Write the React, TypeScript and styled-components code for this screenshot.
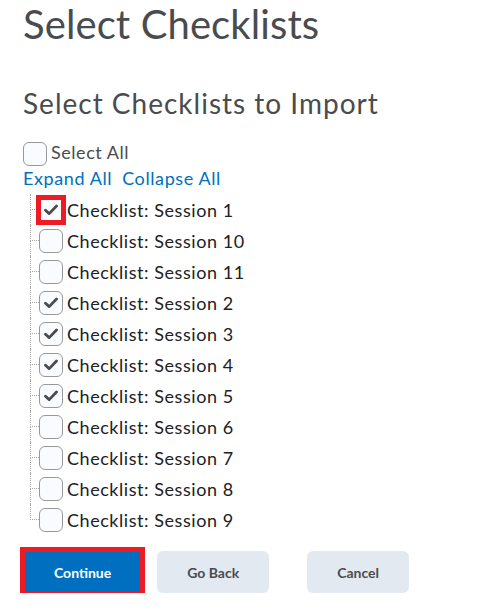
import styled, { createGlobalStyle } from 'styled-components';

const GlobalStyle = createGlobalStyle`
  body {
    margin: 0;
    background: #fff;
    font-family: Lato, 'Noto Sans', sans-serif;
    color: #202122;
  }
`;

const SESSIONS = [
  { name: 'Checklist: Session 1', checked: true, highlight: true },
  { name: 'Checklist: Session 10', checked: false },
  { name: 'Checklist: Session 11', checked: false },
  { name: 'Checklist: Session 2', checked: true },
  { name: 'Checklist: Session 3', checked: true },
  { name: 'Checklist: Session 4', checked: true },
  { name: 'Checklist: Session 5', checked: true },
  { name: 'Checklist: Session 6', checked: false },
  { name: 'Checklist: Session 7', checked: false },
  { name: 'Checklist: Session 8', checked: false },
  { name: 'Checklist: Session 9', checked: false },
];

const Page = styled.div`
  padding-left: 23px;
`;

const Title = styled.h1`
  margin: 0;
  font-size: 40px;
  line-height: 48px;
  font-weight: 400;
  letter-spacing: 0.1px;
  color: #494c4e;
`;

const SubTitle = styled.h2`
  margin: 38px 0 0;
  font-size: 28px;
  line-height: 34px;
  font-weight: 400;
  letter-spacing: 1px;
  color: #494c4e;
`;

const SelectAllRow = styled.label`
  display: flex;
  align-items: center;
  gap: 4px;
  height: 24px;
  margin-top: 22px;
  font-size: 18px;
  letter-spacing: 0.55px;
  color: #494c4e;
`;

const SelectAllText = styled.span`
  margin-bottom: 4px;
`;

const Links = styled.div`
  display: flex;
  gap: 10px;
  font-size: 18px;
  line-height: 24px;
  letter-spacing: 0.6px;
`;

const Link = styled.a`
  color: #006fbf;
  text-decoration: none;
  cursor: pointer;
`;

const Tree = styled.ul`
  list-style: none;
  margin: 4px 0 0 7px;
  padding: 0;
`;

const Row = styled.li`
  display: flex;
  align-items: center;
  height: 31px;
`;

const Connector = styled.span`
  display: flex;
  flex-direction: column;
  align-self: stretch;
  width: 9px;
  flex-shrink: 0;
`;

const ConnectorTop = styled.span`
  flex: 1;
  border-left: 1px dotted #a5a5a5;
  border-bottom: 1px dotted #a5a5a5;
`;

const ConnectorBottom = styled.span<{ $last?: boolean }>`
  flex: 1;
  border-left: ${(p) => (p.$last ? 'none' : '1px dotted #a5a5a5')};
`;

const Box = styled.span<{ $highlight?: boolean }>`
  display: flex;
  align-items: center;
  justify-content: center;
  box-sizing: border-box;
  width: 24px;
  height: 24px;
  flex-shrink: 0;
  border: 1.5px solid #96999c;
  border-radius: ${(p) => (p.$highlight ? '0' : '6px')};
  background: #f9fbff;
  outline: ${(p) => (p.$highlight ? '5px solid #ed1c24' : 'none')};
  outline-offset: -2px;
`;

const ItemLabel = styled.span`
  margin-left: 4px;
  font-size: 18px;
  letter-spacing: 0.55px;
  white-space: nowrap;
`;

const Buttons = styled.div`
  display: flex;
  align-items: center;
  margin-top: 16px;
  padding-left: 1px;
`;

const Button = styled.button<{ $primary?: boolean; $highlight?: boolean; $push?: number }>`
  height: 42px;
  padding: 0 30px;
  margin-left: ${(p) => p.$push ?? 0}px;
  border: none;
  border-radius: ${(p) => (p.$highlight ? '0' : '6px')};
  background: ${(p) => (p.$primary ? '#006fbf' : '#e3e9f1')};
  color: ${(p) => (p.$primary ? '#fff' : '#494c4e')};
  font-family: Lato, 'Noto Sans', sans-serif;
  font-size: 14px;
  font-weight: 700;
  outline: ${(p) => (p.$highlight ? '5px solid #ed1c24' : 'none')};
  outline-offset: -1px;
  cursor: pointer;
`;

const Check = () => (
  <svg width="14" height="12" viewBox="0 0 14 12">
    <polyline
      points="1.5,6.2 5.2,9.6 12.5,2"
      fill="none"
      stroke="#494c4e"
      strokeWidth="2.8"
      strokeLinecap="round"
      strokeLinejoin="round"
    />
  </svg>
);

export default function App() {
  return (
    <Page>
      <GlobalStyle />
      <Title>Select Checklists</Title>
      <SubTitle>Select Checklists to Import</SubTitle>
      <SelectAllRow>
        <Box />
        <SelectAllText>Select All</SelectAllText>
      </SelectAllRow>
      <Links>
        <Link>Expand All</Link>
        <Link>Collapse All</Link>
      </Links>
      <Tree>
        {SESSIONS.map((s, i) => (
          <Row key={s.name}>
            <Connector>
              <ConnectorTop />
              <ConnectorBottom $last={i === SESSIONS.length - 1} />
            </Connector>
            <Box $highlight={s.highlight}>{s.checked ? <Check /> : null}</Box>
            <ItemLabel>{s.name}</ItemLabel>
          </Row>
        ))}
      </Tree>
      <Buttons>
        <Button $primary $highlight>
          Continue
        </Button>
        <Button $push={16}>Go Back</Button>
        <Button $push={38}>Cancel</Button>
      </Buttons>
    </Page>
  );
}
